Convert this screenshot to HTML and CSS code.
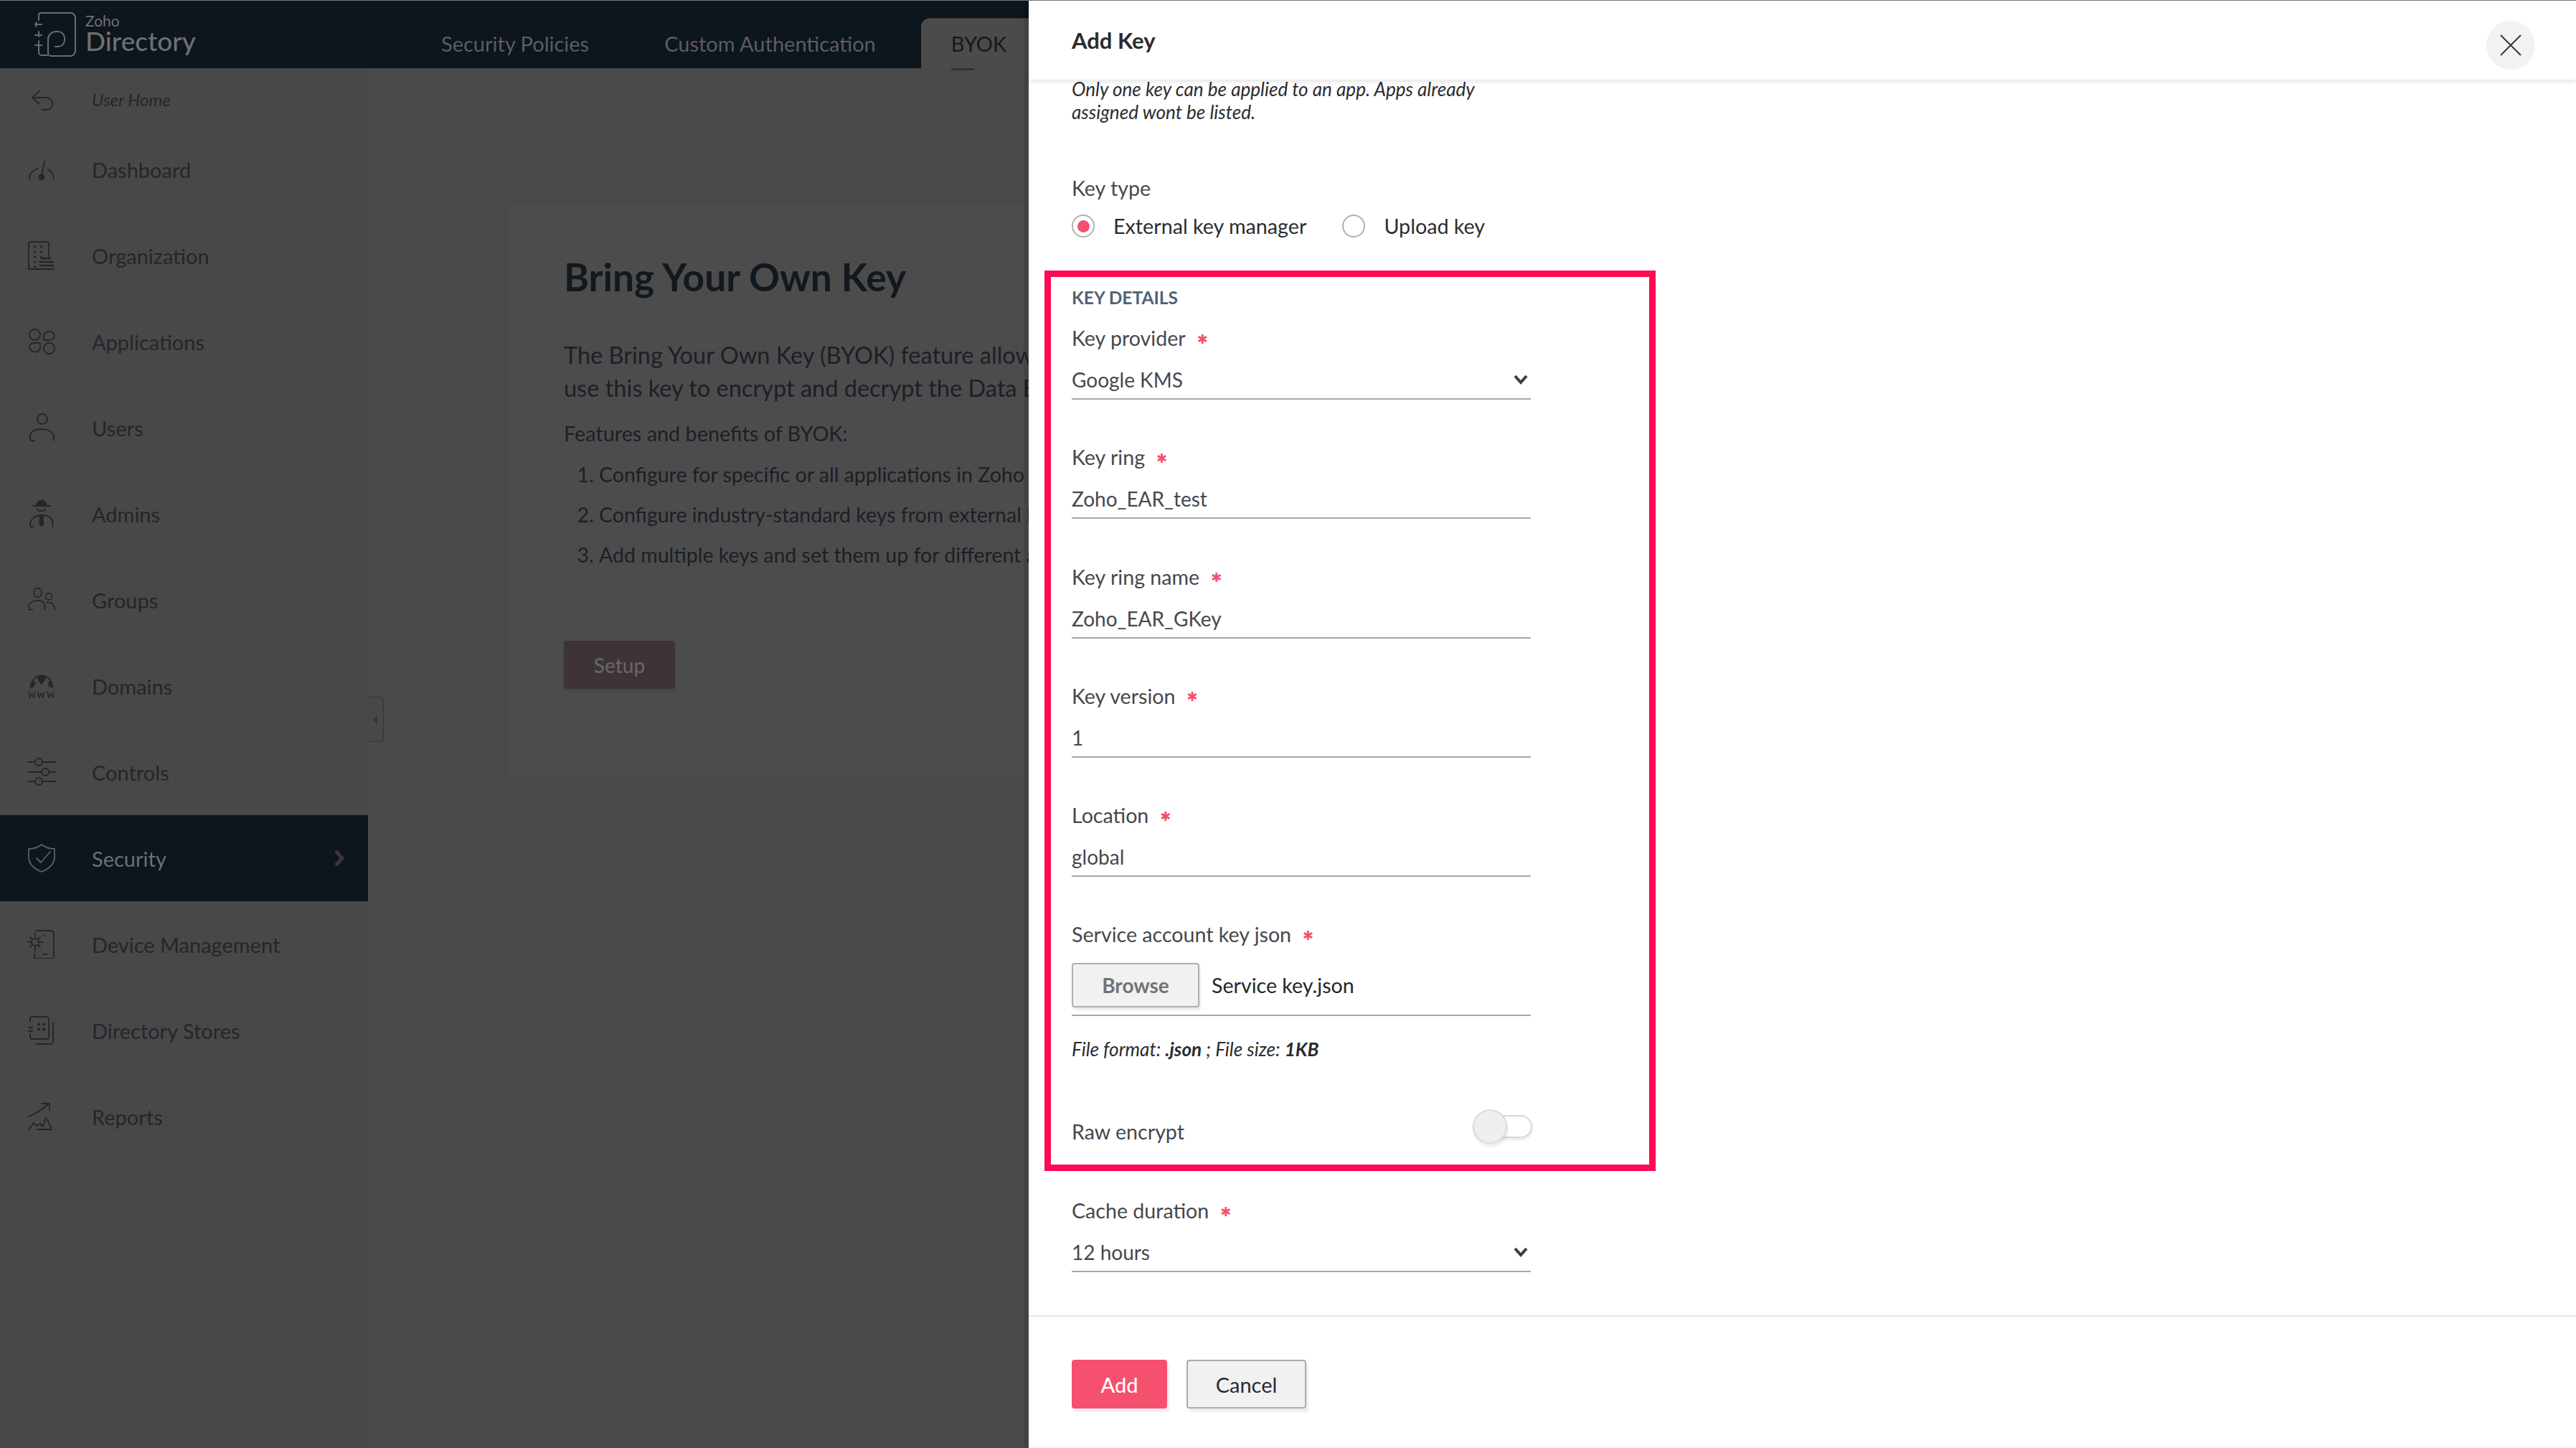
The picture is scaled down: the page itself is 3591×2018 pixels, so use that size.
FILE: index.html
```html
<!DOCTYPE html>
<html lang="en">
<head>
<meta charset="utf-8">
<title>Zoho Directory - BYOK</title>
<link rel="stylesheet" href="styles.css">
</head>
<body>
<div class="app">
  <header class="topbar">
    <div class="brand">
      <svg class="brand-mark" viewBox="0 0 60 64" fill="none" stroke="#6b6b6b" stroke-width="2" stroke-linecap="round" stroke-linejoin="round">
        <path d="M7 12V5a3 3 0 0 1 3-3h41a7 7 0 0 1 7 7v46a7 7 0 0 1-7 7H24a4 4 0 0 1-4-4V39a11 11 0 0 1 11-11h3a9 9 0 0 1 9 9v3a9 9 0 0 1-9 9h-4"/>
        <path d="M2 18h9M4 15l-2 3 2 3M7 28v7M2 33h9M7 41v6a13 13 0 0 0 0 1M2 47h9M7 48v9a4 4 0 0 0 4 4h8"/>
      </svg>
      <div class="brand-text"><span class="brand-zoho">Zoho</span><span class="brand-name">Directory</span></div>
    </div>
    <nav class="tabs">
      <a class="tab">Security Policies</a>
      <a class="tab">Custom Authentication</a>
      <a class="tab tab-active">BYOK</a>
    </nav>
  </header>
  <div class="workspace">
    <aside class="sidebar">
      <div class="nav-item nav-home">
        <svg class="icon" viewBox="0 0 40 40"><path d="M17 8 7 17l10 9M7 17h20a8 8 0 0 1 8 8v1a8 8 0 0 1-8 8h-7"/></svg>
        <span class="home-label">User Home</span>
      </div>
      <div class="nav-item">
        <svg class="icon" viewBox="0 0 40 40"><path d="M3 34c0-8 4-13 12-15M37 34c0-6-3-11-8-14M24 9l-4 20"/><circle class="solid" cx="20" cy="31" r="4"/></svg>
        <span>Dashboard</span>
      </div>
      <div class="nav-item">
        <svg class="icon" viewBox="0 0 40 40"><path d="M30 24V4a3 3 0 0 0-3-3H5a3 3 0 0 0-3 3v35h35"/><path class="dots" d="M9 8h3M18 8h3M9 15h3M18 15h3M9 22h3M18 22h3M9 29h3M9 36h3M17 29h20M17 34h20M19 24h14"/></svg>
        <span>Organization</span>
      </div>
      <div class="nav-item">
        <svg class="icon" viewBox="0 0 40 40"><rect x="3" y="3" width="15" height="15" rx="7"/><path d="M23 11a8 8 0 0 1 15 0c0 5-3 7-8 7h-7z"/><path d="M3 28c0-4 3-6 7-6h8v8a8 8 0 0 1-15-2z"/><rect x="23" y="22" width="15" height="15" rx="7"/></svg>
        <span>Applications</span>
      </div>
      <div class="nav-item">
        <svg class="icon" viewBox="0 0 40 40"><ellipse cx="21" cy="8" rx="7" ry="7"/><path d="M10 38H7a3 3 0 0 1-3-3v-3c0-6 6-10 16-10s17 5 17 11v5"/></svg>
        <span>Users</span>
      </div>
      <div class="nav-item">
        <svg class="icon" viewBox="0 0 40 40"><path class="solid" d="M13 7a7 6 0 0 1 14 0v2H13z"/><path d="M8 9h24M14 13c1 4 10 4 11 0M5 38c-2-4-1-15 15-16 15 0 17 9 15 16M5 38h4M20 22v-1"/><path class="solid" d="M18 23h4l1 11-3 4-3-4z"/></svg>
        <span>Admins</span>
      </div>
      <div class="nav-item">
        <svg class="icon" viewBox="0 0 44 40"><ellipse cx="16" cy="9" rx="6" ry="7"/><circle cx="33" cy="15" r="5"/><path d="M8 35H2v-4c0-6 6-10 14-10s11 4 11 10v4M30 24c8 0 12 4 12 11"/></svg>
        <span>Groups</span>
      </div>
      <div class="nav-item">
        <svg class="icon" viewBox="0 0 44 40"><path d="M5 22C6 10 14 4 22 4s16 6 17 18"/><path class="solid" d="M15 6c4-3 10-3 14 0l-4 7-3 5-4-6zM9 12l3 3-2 6-5 1zM35 12l-3 3 2 6 5 1z"/><path class="thin" d="M2 29l2 9 3-7 3 7 2-9M16 29l2 9 3-7 3 7 2-9M31 29l2 9 3-7 3 7 2-9"/></svg>
        <span>Domains</span>
      </div>
      <div class="nav-item">
        <svg class="icon" viewBox="0 0 40 40"><path d="M1 6h10M21 6h18M1 20h19M30 20h9M1 33h10M21 33h18"/><circle cx="16" cy="6" r="5"/><circle cx="25" cy="20" r="5"/><circle cx="16" cy="33" r="5"/></svg>
        <span>Controls</span>
      </div>
      <div class="nav-item nav-active">
        <svg class="icon" viewBox="0 0 40 40"><path d="M20 1c5 4 11 6 18 6v11c0 10-8 17-18 21C10 35 2 28 2 18V7c7 0 13-2 18-6z"/><path class="thin-check" d="M13 20l6 6 13-15"/></svg>
        <span class="nav-grow">Security</span>
        <svg class="nav-chevron" viewBox="0 0 16 24"><path d="M3 2l9 10-9 10"/></svg>
      </div>
      <div class="nav-item">
        <svg class="icon" viewBox="0 0 40 40"><path d="M13 1h20a4 4 0 0 1 4 4v31a4 4 0 0 1-4 4H13a3 3 0 0 1-3-3v-4M22 34h6M24 8h1"/><circle cx="11" cy="17" r="5"/><path d="M11 5v5M11 24v5M1 17h4M17 17h4M4 10l3 3M15 21l3 3M18 10l-3 3M7 21l-3 3"/></svg>
        <span>Device Management</span>
      </div>
      <div class="nav-item">
        <svg class="icon" viewBox="0 0 40 40"><path d="M4 8V4a3 3 0 0 1 3-3h19a4 4 0 0 1 4 4v24a3 3 0 0 1-3 3H7a3 3 0 0 1-3-3v-4M36 9v26a4 4 0 0 1-4 4H12"/><path class="dots" d="M14 11h4M21 11h4M14 18h4M21 18h4M14 12h4M21 12h4M14 19h4M21 19h4M2 16h6M2 21h6"/></svg>
        <span>Directory Stores</span>
      </div>
      <div class="nav-item">
        <svg class="icon" viewBox="0 0 40 40"><path d="M1 20C12 17 20 11 30 2M20 2h11v10"/><path d="M2 38l7-9 4 4 5-3 4 4 4-12 3 4 5 12H14"/></svg>
        <span>Reports</span>
      </div>
      <button class="collapse" type="button" aria-label="Collapse"></button>
    </aside>
    <main class="main">
      <section class="card">
        <h1>Bring Your Own Key</h1>
        <p class="lead">The Bring Your Own Key (BYOK) feature allows you to create or manage your own encryption key and<br>use this key to encrypt and decrypt the Data Encryption Keys used in your organization.</p>
        <p class="features">Features and benefits of BYOK:</p>
        <ol class="feature-list">
          <li>Configure for specific or all applications in Zoho Directory for your organization.</li>
          <li>Configure industry-standard keys from external key managers or upload your own key.</li>
          <li>Add multiple keys and set them up for different applications as required.</li>
        </ol>
        <a class="setup">Setup</a>
      </section>
    </main>
  </div>

  <aside class="drawer">
    <div class="drawer-head">
      <h2>Add Key</h2>
      <button class="close" type="button" aria-label="Close">
        <svg viewBox="0 0 30 30"><path d="M1 1l28 28M29 1L1 29"/></svg>
      </button>
    </div>
    <div class="drawer-body">
      <p class="note">Only one key can be applied to an app. Apps already assigned wont be listed.</p>
      <div class="keytype">
        <div class="label">Key type</div>
        <div class="radios">
          <label class="radio radio-on"><i></i>External key manager</label>
          <label class="radio"><i></i>Upload key</label>
        </div>
      </div>
      <section class="details">
        <h3>KEY DETAILS</h3>
        <div class="field">
          <div class="label">Key provider<span class="req">✱</span></div>
          <div class="control">Google KMS<svg class="caret" viewBox="0 0 20 14"><path d="M2 2l8 9 8-9"/></svg></div>
        </div>
        <div class="field">
          <div class="label">Key ring<span class="req">✱</span></div>
          <div class="control">Zoho_EAR_test</div>
        </div>
        <div class="field">
          <div class="label">Key ring name<span class="req">✱</span></div>
          <div class="control">Zoho_EAR_GKey</div>
        </div>
        <div class="field">
          <div class="label">Key version<span class="req">✱</span></div>
          <div class="control">1</div>
        </div>
        <div class="field">
          <div class="label">Location<span class="req">✱</span></div>
          <div class="control">global</div>
        </div>
        <div class="field field-file">
          <div class="label">Service account key json<span class="req">✱</span></div>
          <div class="file-control"><span class="browse">Browse</span><span class="file-name">Service key.json</span></div>
          <p class="hint">File format: <b>.json</b> ; File size: <b>1KB</b></p>
        </div>
        <div class="raw">
          <span class="raw-label">Raw encrypt</span>
          <span class="toggle"><i></i></span>
        </div>
      </section>
      <div class="field field-cache">
        <div class="label">Cache duration<span class="req">✱</span></div>
        <div class="control">12 hours<svg class="caret" viewBox="0 0 20 14"><path d="M2 2l8 9 8-9"/></svg></div>
      </div>
    </div>
    <div class="drawer-foot">
      <button class="btn btn-primary" type="button">Add</button>
      <button class="btn btn-plain" type="button">Cancel</button>
    </div>
  </aside>
</div>
</body>
</html>
```
FILE: styles.css
```css
* { box-sizing: border-box; }
html, body { margin: 0; height: 100%; overflow: hidden; }
body { font-family: Lato, "Open Sans", sans-serif; background: #494949; }

.app { position: relative; height: 100vh; display: flex; flex-direction: column; border-top: 1px solid #6e7a80; }

/* top bar */
.topbar { height: 94px; flex: none; background: #0d151d; display: flex; align-items: flex-end; }
.brand { width: 573px; height: 94px; flex: none; display: flex; align-items: center; padding-left: 47px; gap: 12px; }
.brand-mark { width: 60px; height: 64px; }
.brand-text { display: flex; flex-direction: column; color: #6f6f6f; margin-top: -2px; }
.brand-zoho { font-size: 21px; line-height: 20px; }
.brand-name { font-size: 37px; line-height: 36px; font-weight: 500; }
.tabs { display: flex; gap: 21px; align-items: flex-end; height: 70px; }
.tab { position: relative; height: 70px; padding: 0 42px; display: flex; align-items: center; font-size: 29px; color: #5e5c5e; white-space: nowrap; }
.tab-active { background: #4b4b4b; color: #13181f; border-radius: 12px 0 0 0; border-top: 1px solid #3f3439; }
.tab-active::after { content: ""; position: absolute; left: 42px; bottom: -3px; width: 32px; height: 3px; background: #3c2e34; }

/* workspace */
.workspace { flex: 1; display: flex; min-height: 0; }
.sidebar { position: relative; width: 513px; flex: none; background: #484848; display: flex; flex-direction: column; }
.nav-item { height: 120px; flex: none; display: flex; align-items: center; padding-left: 38px; gap: 50px; font-size: 29px; color: #26252c; }
.nav-home { height: 81px; padding-top: 6px; }
.home-label { font-size: 24px; font-style: italic; }
.nav-active { background: #0d151d; color: #6f6f6f; }
.nav-grow { flex: 1; }
.icon { width: 40px; height: 40px; flex: none; fill: none; stroke: #25252b; stroke-width: 1.8; stroke-linecap: round; stroke-linejoin: round; }
.icon .solid { fill: #25252b; stroke-width: 1; }
.icon .dots { stroke-width: 2.6; stroke-linecap: butt; }
.icon .thin { stroke-width: 1.5; }
.nav-active .icon { stroke: #5f5f5f; }
.nav-chevron { width: 16px; height: 24px; margin-right: 32px; fill: none; stroke: #3f353a; stroke-width: 5; }
.collapse { position: absolute; left: 100%; top: 876px; width: 22px; height: 63px; padding: 0; background: #484848; border: 1px solid #3c3237; border-left: 0; border-radius: 0 5px 5px 0; }
.collapse::after { content: ""; position: absolute; left: 7px; top: 25px; border: 6px solid transparent; border-left: 0; border-right-color: #3c3237; }

.main { flex: 1; min-width: 0; background: #4a4a4a; padding: 187px 0 0 191px; overflow: hidden; }
.card { height: 803px; background: #4c4c4c; border: 2px solid #474747; border-right: 0; border-radius: 14px 0 0 14px; padding: 65px 0 0 80px; white-space: nowrap; overflow: hidden; }
.card h1 { margin: 0; font-size: 53.3px; line-height: 72px; font-weight: 700; color: #12181f; }
.lead { margin: 51px 0 0; font-size: 32.5px; line-height: 46px; color: #1b1f28; }
.features { margin: 20px 0 0; font-size: 28.8px; line-height: 40px; color: #1b1f28; }
.feature-list { margin: 9px 0 0; padding: 0 0 0 49px; font-size: 28.5px; line-height: 56px; color: #1b1f28; }
.setup { display: flex; align-items: center; justify-content: center; width: 155px; height: 67px; margin-top: 92px; background: #3d3338; border-radius: 4px; box-shadow: 0 3px 4px rgba(0,0,0,.08); font-size: 28px; font-weight: 500; color: #666; }

/* drawer */
.drawer { position: absolute; top: 0; right: 0; bottom: 0; width: 2157px; background: #fff; display: flex; flex-direction: column; box-shadow: -7px 0 0 rgba(0,0,0,.1); color: #3b3d42; }
.drawer-head { position: relative; z-index: 1; height: 110px; flex: none; display: flex; align-items: center; justify-content: space-between; padding: 0 57px 0 60px; background: #fff; box-shadow: 0 3px 6px rgba(0,0,0,.1); }
.drawer-head h2 { margin: 0; font-size: 31px; font-weight: 700; color: #2c2a2e; }
.close { width: 68px; height: 68px; padding: 0; margin: 14px 0 0; border: 0; border-radius: 50%; background: #f2f2f2; display: flex; align-items: center; justify-content: center; }
.close svg { width: 30px; height: 30px; fill: none; stroke: #38353a; stroke-width: 2; }
.drawer-body { flex: 1; min-height: 0; padding-left: 60px; overflow: hidden; }
.note { width: 640px; margin: -3px 0 0; font-size: 26.1px; line-height: 32px; font-style: italic; color: #2c2c30; }
.label { height: 40px; display: flex; align-items: center; font-size: 28.6px; color: #45484d; white-space: nowrap; }
.keytype { margin-top: 70px; }
.radios { display: flex; height: 40px; margin-top: 13px; gap: 50px; }
.radio { display: flex; align-items: center; gap: 26px; font-size: 28.7px; color: #2c2c30; }
.radio i { width: 32px; height: 32px; border: 2px solid #b0b0b0; border-radius: 50%; display: flex; align-items: center; justify-content: center; }
.radio-on i::after { content: ""; width: 17px; height: 17px; border-radius: 50%; background: #f6506f; }
.req { font-family: "DejaVu Sans", sans-serif; font-size: 18px; line-height: 1; color: #f6506f; margin-left: 16px; padding-top: 3px; }

.details { width: 852px; margin: 42px 0 0 -38px; border: 9px solid #ff0a54; padding: 8px 0 0 29px; height: 1255px; }
.details h3 { margin: 0; height: 40px; display: flex; align-items: center; font-size: 24.5px; font-weight: 700; color: #4f6379; }
.field { margin-top: 17px; width: 640px; }
.field + .field { margin-top: 60.3px; }
.control { position: relative; height: 59px; margin-top: 7px; display: flex; align-items: center; justify-content: space-between; padding: 5px 0 0; border-bottom: 2px solid #a8a8a8; font-size: 28px; color: #45484d; }
.caret { width: 20px; height: 14px; margin-right: 4px; fill: none; stroke: #3b3d42; stroke-width: 4; }
.file-control { display: flex; align-items: flex-start; height: 74px; margin-top: 20px; gap: 17px; border-bottom: 2px solid #a8a8a8; }
.browse { width: 178px; height: 62px; display: flex; align-items: center; justify-content: center; background: #f1f1f1; border: 2px solid #b0b0b0; border-radius: 4px; box-shadow: 2px 4px 3px rgba(0,0,0,.08); font-size: 28px; font-weight: 700; color: #6f7378; }
.file-name { line-height: 62px; font-size: 28.6px; color: #26262a; }
.hint { margin: 28px 0 0; font-size: 26.1px; line-height: 36px; font-style: italic; color: #2c2c30; }
.hint b { font-weight: 700; }
.raw { width: 642px; height: 60px; margin-top: 60px; display: flex; align-items: center; justify-content: space-between; }
.raw-label { font-size: 28.6px; color: #45484d; padding-top: 14px; }
.toggle { position: relative; width: 83px; height: 32px; border: 2px solid #d8d8d8; border-radius: 16px; background: #fff; box-shadow: 1px 3px 3px rgba(0,0,0,.08); }
.toggle i { position: absolute; left: -2px; top: -10px; width: 48px; height: 48px; border-radius: 50%; background: #efefef; border: 2px solid #dcdcdc; box-shadow: 1px 3px 4px rgba(0,0,0,.1); }
.field-cache { margin-top: 35px; }
.drawer-foot { height: 185px; flex: none; border-top: 2px solid #e6e6e6; padding: 60px 0 0 60px; display: flex; gap: 27px; align-items: flex-start; box-shadow: inset 0 -3px 0 #f7f7f7; }
.btn { height: 68px; border-radius: 4px; font: 29px Lato, sans-serif; box-shadow: 3px 5px 3px rgba(0,0,0,.07); padding: 0; }
.btn-primary { width: 133px; background: #f6506f; border: 0; color: #fff; font-weight: 500; }
.btn-plain { width: 167px; background: #f1f1f1; border: 2px solid #ababab; color: #2c2a2e; }
```
